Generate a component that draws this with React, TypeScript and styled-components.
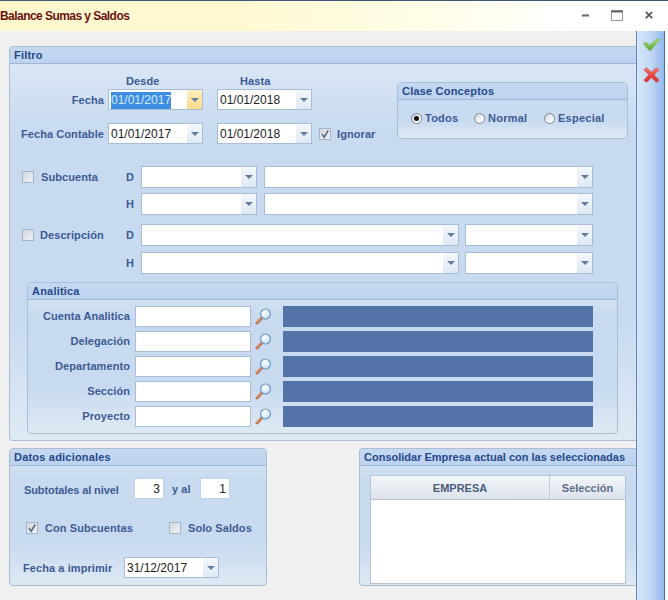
import React from 'react'
import styled, { createGlobalStyle } from 'styled-components'

const GlobalStyle = createGlobalStyle`
  html, body { margin: 0; padding: 0; background: #fff; }
  body { font-family: "Liberation Sans", Arial, sans-serif; }
`

const Window = styled.div`
  width: 668px;
  height: 600px;
  display: flex;
  flex-direction: column;
  overflow: hidden;
  background: #fff;
`

const TitleBar = styled.div`
  height: 31px;
  box-sizing: border-box;
  flex: none;
  display: flex;
  align-items: center;
  justify-content: space-between;
  border-top: 1px solid #3d5a78;
  background: linear-gradient(90deg, #fff8cc 0%, #fff9d2 35%, #fffde8 65%, #ffffff 85%);
`

const Title = styled.div`
  font-size: 12px;
  font-weight: bold;
  letter-spacing: -0.55px;
  color: #6a1212;
`

const Controls = styled.div`
  display: flex;
  align-items: center;
  width: 71px;
  height: 12px;
  justify-content: space-between;
  margin-right: 15px;
  margin-top: -2px;
`

const Content = styled.div`
  flex: 1;
  display: flex;
  min-height: 0;
`

const Main = styled.div`
  width: 636px;
  flex: none;
  box-sizing: border-box;
  padding: 15px 0 0 9px;
  background: #f0f0f0;
`

const ActionBar = styled.div`
  width: 29px;
  flex: none;
  box-sizing: border-box;
  display: flex;
  flex-direction: column;
  align-items: center;
  padding: 7px 0 0 2px;
  gap: 16px;
  border-left: 1px solid #5f86b4;
  border-right: 1px solid #3d6ea8;
  background: linear-gradient(90deg, #d6e5fa 0%, #c6daf7 45%, #93b9ee 100%);
`

const Panel = styled.section<{ $w: number; $h: number; $open?: boolean }>`
  box-sizing: border-box;
  width: ${p => p.$w}px;
  height: ${p => p.$h}px;
  border: 1px solid #a9bfd6;
  ${p => (p.$open ? 'border-right: none;' : '')}
  border-radius: 4px ${p => (p.$open ? '0 0' : '4px 4px')} 4px;
  overflow: hidden;
  background: linear-gradient(180deg, #dfe9f6 0%, #c7daf0 22%, #c7daf0 68%, #dfe9f4 100%);
`

const PanelHeader = styled.div`
  height: 17px;
  box-sizing: border-box;
  padding-left: 4px;
  line-height: 16px;
  font-size: 11px;
  font-weight: bold;
  letter-spacing: 0.2px;
  white-space: nowrap;
  color: #25488a;
  background: linear-gradient(180deg, #c4d8f0 0%, #bcd2ee 100%);
  border-bottom: 1px solid #9db6d6;
`

const WideHeader = styled(PanelHeader)`
  letter-spacing: 0;
`

const Label = styled.span`
  font-size: 11px;
  font-weight: bold;
  letter-spacing: 0.08px;
  color: #3d5a94;
  white-space: nowrap;
`

const Field = styled.div<{ $w: number; $h?: number }>`
  box-sizing: border-box;
  width: ${p => p.$w}px;
  height: ${p => p.$h ?? 21}px;
  flex: none;
  display: flex;
  align-items: center;
  background: #fff;
  border: 1px solid #a8bdd8;
  font-size: 12px;
  color: #222;
`

const FieldText = styled.span`
  flex: 1;
  padding-left: 2px;
  white-space: nowrap;
`

const Selected = styled.span`
  background: #3d8fe6;
  color: #d8e8fb;
  padding: 1px 0 2px;
`

const DropButton = styled.span<{ $active?: boolean }>`
  width: 15px;
  height: 100%;
  flex: none;
  display: flex;
  align-items: center;
  justify-content: center;
  background: ${p =>
    p.$active
      ? 'linear-gradient(180deg, #fdf0c0 0%, #fbd98a 100%)'
      : 'linear-gradient(180deg, #f4f7fb 0%, #dfe8f3 100%)'};
  &::after {
    content: '';
    border-left: 4px solid transparent;
    border-right: 4px solid transparent;
    border-top: 4px solid #637da0;
  }
`

const NumberField = styled(Field)`
  justify-content: flex-end;
  padding-right: 3px;
  border-color: #c2d3e8;
`

const Box = styled.span`
  box-sizing: border-box;
  width: 12px;
  height: 12px;
  flex: none;
  display: inline-flex;
  align-items: center;
  justify-content: center;
  border: 1px solid #a5b5c8;
  background: linear-gradient(135deg, #d4d8de 0%, #eef1f5 100%);
`

const Check = ({ checked }: { checked?: boolean }) => (
  <Box>
    {checked && (
      <svg width="10" height="10" viewBox="0 0 10 10">
        <path d="M2 5 L4.2 8.2 L8.2 1.5" fill="none" stroke="#5d6b7c" strokeWidth="1.6" />
      </svg>
    )}
  </Box>
)

const Dropdown = ({ w, h, value, focus }: { w: number; h?: number; value?: string; focus?: boolean }) => (
  <Field $w={w} $h={h}>
    <FieldText>{focus ? <Selected>{value}</Selected> : value}</FieldText>
    <DropButton $active={focus} />
  </Field>
)

/* top block: dates and clase conceptos */
const TopBlock = styled.div`
  display: flex;
  box-sizing: border-box;
  height: 80px;
  padding-top: 11px;
`

const Dates = styled.div`
  width: 387px;
  flex: none;
`

const DateHead = styled.div`
  height: 14px;
  display: flex;
  margin-left: 116px;
`

const HeadLabel = styled(Label)`
  width: 114px;
`

const DateRow = styled.div<{ $mt?: number }>`
  display: flex;
  align-items: center;
  margin-top: ${p => p.$mt ?? 0}px;
`

const DateLabel = styled(Label)`
  width: 94px;
  margin-right: 4px;
  text-align: right;
`

const DateGap = styled.span`
  width: 14px;
  flex: none;
`

const IgnoreGroup = styled.div`
  display: flex;
  align-items: center;
  gap: 6px;
  margin-left: 7px;
`

const ClaseBox = styled(Panel)`
  margin-top: 7px;
`

const Radios = styled.div`
  display: flex;
  align-items: center;
  padding: 12px 0 0 13px;
`

const RadioItem = styled.div<{ $w: number }>`
  width: ${p => p.$w}px;
  display: flex;
  align-items: center;
  gap: 3px;
`

const RadioLabel = styled(Label)`
  letter-spacing: 0.25px;
`

const RadioDot = styled.span<{ $on?: boolean }>`
  box-sizing: border-box;
  width: 11px;
  height: 11px;
  border-radius: 50%;
  flex: none;
  display: flex;
  align-items: center;
  justify-content: center;
  border: 1px solid #7d8895;
  background: linear-gradient(135deg, #c8ccd2 0%, #ffffff 70%);
  &::after {
    content: '';
    display: ${p => (p.$on ? 'block' : 'none')};
    width: 5px;
    height: 5px;
    border-radius: 50%;
    background: #111;
  }
`

/* subcuenta and descripcion rows */
const AccountRow = styled.div<{ $mt: number }>`
  display: grid;
  grid-template-columns: 104px 15px auto;
  align-items: center;
  height: 22px;
  margin-top: ${p => p.$mt}px;
  padding-left: 12px;
`

const AccountName = styled.div<{ $gap: number }>`
  display: flex;
  align-items: center;
  gap: ${p => p.$gap}px;
`

const FieldPair = styled.div<{ $gap: number }>`
  display: flex;
  gap: ${p => p.$gap}px;
`

/* analitica */
const AnaliticaBox = styled(Panel)`
  margin: 8px 0 0 17px;
`

const AnaliticaGrid = styled.div`
  display: grid;
  grid-template-columns: 102px 121px 32px 310px;
  grid-auto-rows: 21px;
  row-gap: 4px;
  align-items: center;
  padding-top: 6px;
`

const AnaliticaLabel = styled(Label)`
  text-align: right;
  padding-bottom: 2px;
`

const PlainInput = styled(Field)`
  margin-left: 5px;
`

const LookupIcon = styled.span`
  display: flex;
  margin-left: 4px;
`

const DarkBar = styled.div`
  height: 21px;
  background: #5474a8;
`

/* lower panels */
const BottomBlock = styled.div`
  display: flex;
  justify-content: space-between;
  margin-top: 7px;
`

const DatosRow = styled.div<{ $mt: number; $pl: number }>`
  display: flex;
  align-items: center;
  margin-top: ${p => p.$mt}px;
  padding-left: ${p => p.$pl}px;
`

const Spaced = styled.span<{ $w: number }>`
  width: ${p => p.$w}px;
  flex: none;
`

const PrintLabel = styled(Spaced)`
  padding-bottom: 2px;
`

const SubtotalLabel = styled(Label)`
  letter-spacing: -0.1px;
`

const Connector = styled(Label)`
  width: 28px;
  flex: none;
  padding-left: 8px;
`

const CheckGroup = styled.div<{ $w: number }>`
  width: ${p => p.$w}px;
  display: flex;
  align-items: center;
  gap: 7px;
`

const Table = styled.div`
  box-sizing: border-box;
  width: 256px;
  height: 109px;
  margin: 9px 0 0 10px;
  background: #fff;
  border: 1px solid #b5c4d6;
`

const TableHead = styled.div`
  display: grid;
  grid-template-columns: 178px 1fr;
  height: 24px;
  box-sizing: border-box;
  border-bottom: 1px solid #b4c2d2;
  background: linear-gradient(180deg, #f2f5f9 0%, #dde3ec 100%);
`

const HeadCell = styled.div`
  display: flex;
  align-items: center;
  justify-content: center;
  font-size: 11px;
  font-weight: bold;
  color: #4a5d7d;
  & + & { border-left: 1px solid #c0ccd9; color: #5d6f8a; }
`

const MinIcon = () => (
  <svg width="7" height="3" viewBox="0 0 7 3">
    <rect width="7" height="2" y="0.5" fill="#666" />
  </svg>
)

const MaxIcon = () => (
  <svg width="12" height="11" viewBox="0 0 12 11">
    <rect x="0.5" y="0.5" width="11" height="10" fill="none" stroke="#999" />
    <rect x="0.5" y="0.5" width="11" height="2" fill="#666" />
  </svg>
)

const CloseIcon = () => (
  <svg width="8" height="8" viewBox="0 0 8 8">
    <path d="M0.8 0.8 L7.2 7.2 M7.2 0.8 L0.8 7.2" stroke="#555" strokeWidth="1.7" />
  </svg>
)

const Magnifier = () => (
  <svg width="17" height="17" viewBox="0 0 17 17">
    <defs>
      <radialGradient id="lens" cx="0.4" cy="0.35" r="0.8">
        <stop offset="0" stopColor="#ffffff" />
        <stop offset="1" stopColor="#b9d6f2" />
      </radialGradient>
    </defs>
    <path d="M2 15 L7 9.5" stroke="#c4714a" strokeWidth="3" strokeLinecap="round" />
    <path d="M1.6 14.4 L6.4 9.4" stroke="#eab08f" strokeWidth="1" strokeLinecap="round" />
    <circle cx="10.5" cy="6" r="5" fill="url(#lens)" stroke="#6f9bc2" strokeWidth="1.2" />
  </svg>
)

const OkIcon = () => (
  <svg width="17" height="13" viewBox="0 0 17 13">
    <defs>
      <linearGradient id="okFill" x1="0" y1="0" x2="0" y2="1">
        <stop offset="0" stopColor="#a8e070" />
        <stop offset="1" stopColor="#5aa838" />
      </linearGradient>
    </defs>
    <path
      d="M0.3 5.5 L3.4 4.4 L6.8 7.2 L14.4 0.6 L16.8 1.6 L7.6 12.4 L6.2 12.4 Z"
      fill="url(#okFill)"
      stroke="#62aa3e"
      strokeWidth="0.5"
    />
  </svg>
)

const CancelIcon = () => (
  <svg width="17" height="16" viewBox="0 0 17 16">
    <defs>
      <linearGradient id="xFill" x1="0" y1="0" x2="0" y2="1">
        <stop offset="0" stopColor="#f47a70" />
        <stop offset="0.6" stopColor="#e63f3c" />
        <stop offset="1" stopColor="#d63a3a" />
      </linearGradient>
    </defs>
    <path
      d="M0.8 2.8 L3.6 0.6 L8.5 5 L13.4 0.6 L16.2 2.8 L11.2 7.8 L16.2 13.2 L13.4 15.4 L8.5 10.6 L3.6 15.4 L0.8 13.2 L5.8 7.8 Z"
      fill="url(#xFill)"
      stroke="#cf4a48"
      strokeWidth="0.5"
    />
  </svg>
)

const analiticas = ['Cuenta Analitica', 'Delegación', 'Departamento', 'Sección', 'Proyecto']

const accounts = [
  { name: 'Subcuenta', letter: 'D', mt: 22, a: 116, b: 329, gap: 7, nameGap: 7 },
  { name: '', letter: 'H', mt: 5, a: 116, b: 329, gap: 7, nameGap: 7 },
  { name: 'Descripción', letter: 'D', mt: 9, a: 318, b: 128, gap: 6, nameGap: 6 },
  { name: '', letter: 'H', mt: 6, a: 318, b: 128, gap: 6, nameGap: 6 },
]

export default function App() {
  return (
    <Window>
      <GlobalStyle />
      <TitleBar>
        <Title>Balance Sumas y Saldos</Title>
        <Controls>
          <MinIcon />
          <MaxIcon />
          <CloseIcon />
        </Controls>
      </TitleBar>
      <Content>
        <Main>
          <Panel $w={627} $h={395} $open>
            <PanelHeader>Filtro</PanelHeader>
            <TopBlock>
              <Dates>
                <DateHead>
                  <HeadLabel>Desde</HeadLabel>
                  <HeadLabel>Hasta</HeadLabel>
                </DateHead>
                <DateRow>
                  <DateLabel>Fecha</DateLabel>
                  <Dropdown w={95} value="01/01/2017" focus />
                  <DateGap />
                  <Dropdown w={95} value="01/01/2018" />
                </DateRow>
                <DateRow $mt={13}>
                  <DateLabel>Fecha Contable</DateLabel>
                  <Dropdown w={95} value="01/01/2017" />
                  <DateGap />
                  <Dropdown w={95} value="01/01/2018" />
                  <IgnoreGroup>
                    <Check checked />
                    <Label>Ignorar</Label>
                  </IgnoreGroup>
                </DateRow>
              </Dates>
              <ClaseBox $w={231} $h={57}>
                <PanelHeader>Clase Conceptos</PanelHeader>
                <Radios>
                  <RadioItem $w={63}>
                    <RadioDot $on />
                    <RadioLabel>Todos</RadioLabel>
                  </RadioItem>
                  <RadioItem $w={70}>
                    <RadioDot />
                    <RadioLabel>Normal</RadioLabel>
                  </RadioItem>
                  <RadioItem $w={70}>
                    <RadioDot />
                    <RadioLabel>Especial</RadioLabel>
                  </RadioItem>
                </Radios>
              </ClaseBox>
            </TopBlock>

            {accounts.map((row, i) => (
              <AccountRow key={i} $mt={row.mt}>
                <AccountName $gap={row.nameGap}>
                  {row.name && <Check />}
                  {row.name && <Label>{row.name}</Label>}
                </AccountName>
                <Label>{row.letter}</Label>
                <FieldPair $gap={row.gap}>
                  <Dropdown w={row.a} h={22} />
                  <Dropdown w={row.b} h={22} />
                </FieldPair>
              </AccountRow>
            ))}

            <AnaliticaBox $w={591} $h={152}>
              <PanelHeader>Analitica</PanelHeader>
              <AnaliticaGrid>
                {analiticas.map(name => (
                  <React.Fragment key={name}>
                    <AnaliticaLabel>{name}</AnaliticaLabel>
                    <PlainInput $w={116} />
                    <LookupIcon>
                      <Magnifier />
                    </LookupIcon>
                    <DarkBar />
                  </React.Fragment>
                ))}
              </AnaliticaGrid>
            </AnaliticaBox>
          </Panel>

          <BottomBlock>
            <Panel $w={258} $h={138}>
              <PanelHeader>Datos adicionales</PanelHeader>
              <DatosRow $mt={12} $pl={14}>
                <Spaced $w={110}>
                  <SubtotalLabel>Subtotales al nivel</SubtotalLabel>
                </Spaced>
                <NumberField $w={30}>3</NumberField>
                <Connector>y al</Connector>
                <NumberField $w={30}>1</NumberField>
              </DatosRow>
              <DatosRow $mt={23} $pl={16}>
                <CheckGroup $w={143}>
                  <Check checked />
                  <Label>Con Subcuentas</Label>
                </CheckGroup>
                <CheckGroup $w={90}>
                  <Check />
                  <Label>Solo Saldos</Label>
                </CheckGroup>
              </DatosRow>
              <DatosRow $mt={23} $pl={13}>
                <PrintLabel $w={101}>
                  <Label>Fecha a imprimir</Label>
                </PrintLabel>
                <Dropdown w={95} value="31/12/2017" />
              </DatosRow>
            </Panel>
            <Panel $w={277} $h={138} $open>
              <WideHeader>Consolidar Empresa actual con las seleccionadas</WideHeader>
              <Table>
                <TableHead>
                  <HeadCell>EMPRESA</HeadCell>
                  <HeadCell>Selección</HeadCell>
                </TableHead>
              </Table>
            </Panel>
          </BottomBlock>
        </Main>
        <ActionBar>
          <OkIcon />
          <CancelIcon />
        </ActionBar>
      </Content>
    </Window>
  )
}
